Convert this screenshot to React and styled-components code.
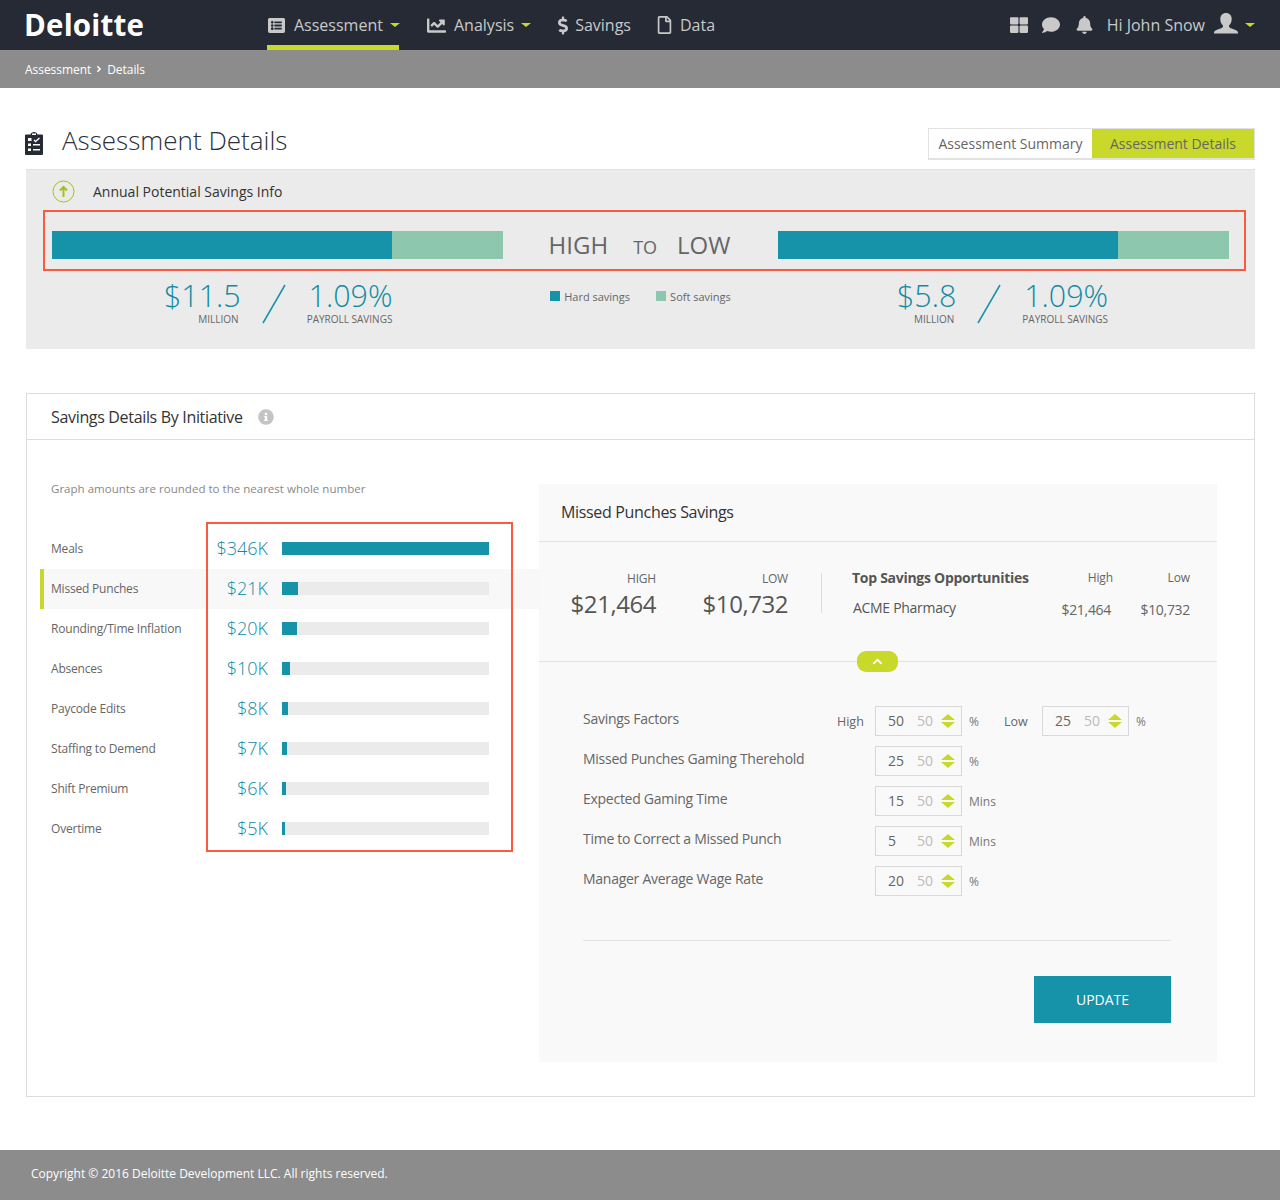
import React from 'react';
import styled, { createGlobalStyle } from 'styled-components';
import { FaListAlt, FaChartLine, FaDollarSign, FaRegFile, FaThLarge, FaComment, FaBell, FaInfoCircle, FaChevronUp, FaAngleRight } from 'react-icons/fa';

const teal = '#1692a9';
const tealText = '#0f8ba3';
const mint = '#8cc7ae';
const lime = '#c8d92b';
const red = '#fb5a3e';

const Global = createGlobalStyle`
  html, body { margin: 0; padding: 0; background: #fff; }
  body { font-family: "Open Sans", "Liberation Sans", sans-serif; color: #555; }
  * { box-sizing: border-box; }
`;
const Page = styled.div`width: 1280px; height: 1200px; display: flex; flex-direction: column;`;
const Header = styled.header`height: 50px; background: #252a34; display: flex; align-items: stretch; padding: 0 25px 0 24px;`;
const Logo = styled.div`width: 243px; font-size: 29.5px; font-weight: 700; color: #fff; line-height: 50px; letter-spacing: 0.2px;`;
const Nav = styled.nav`display: flex; flex: 1;`;
const NavItem = styled.div`
  display: flex; align-items: center; gap: ${p => p.$gap ?? 7}px; height: 50px; color: #c9c9c9; font-size: 16px;
  margin-right: ${p => p.$mr}px; padding-top: 5px;
  border-bottom: 5px solid ${p => (p.$active ? lime : 'transparent')};
  width: ${p => p.$w || 'auto'};
  svg { flex-shrink: 0; }
`;
const Caret = styled.span`
  width: 0; height: 0; border-left: 5px solid transparent; border-right: 5px solid transparent;
  border-top: 4px solid ${lime}; display: inline-block; flex-shrink: 0; margin-left: ${p => p.$ml || 0}px;
`;
const IconList = styled(FaListAlt)`width: 19px; height: 17px;`;
const IconChart = styled(FaChartLine)`width: 21px; height: 19px;`;
const IconDollar = styled(FaDollarSign)`width: 10px; height: 19px;`;
const IconFile = styled(FaRegFile)`width: 15px; height: 18px;`;
const IconGrid = styled(FaThLarge)`width: 18px; height: 18px; margin-right: 14px;`;
const IconChat = styled(FaComment)`width: 18px; height: 18px; margin-right: 15px;`;
const IconBell = styled(FaBell)`width: 19px; height: 18px;`;
const IconInfo = styled(FaInfoCircle)`width: 16px; height: 16px; color: #c4c4c4;`;
const UserIcon = styled.svg`width: 24px; height: 21px; margin: 0 7px 3px 0; fill: #c9c9c9;`;
const UserArea = styled.div`display: flex; align-items: center; color: #c9c9c9; font-size: 16px; padding-bottom: 1px;`;
const Hi = styled.span`margin: 0 9px 0 13px;`;
const Crumb = styled.div`
  height: 38px; background: #8c8c8c; color: #fff; font-size: 12px; display: flex; align-items: center; padding-left: 25px; gap: 3px; letter-spacing: -0.05px;
`;
const TitleRow = styled.div`height: 81px; display: flex; align-items: flex-start; padding: 40px 25px 0 25px; justify-content: space-between;`;
const TitleLeft = styled.div`display: flex; align-items: flex-start; gap: 19px; height: 28px;`;
const TitleIcon = styled.svg`width: 18px; height: 23px; margin-top: 4px;`;
const Title = styled.h1`margin: -2px 0 0; font-size: 26px; font-weight: 300; color: #2c3038; line-height: 28px;`;
const Tabs = styled.div`display: flex; height: 32px; border: 1px solid #e2e2e2; border-bottom-width: 2px;`;
const Tab = styled.div`
  width: ${p => p.$w}px; display: flex; align-items: center; justify-content: center; font-size: 14px; color: #666;
  background: ${p => (p.$active ? lime : '#fff')}; 
`;
const InfoPanel = styled.section`margin: 0 25px 0 26px; height: 180px; background: #ebebeb; border-top: 1px solid #e0e0e0;`;
const InfoHead = styled.div`height: 40px; display: flex; align-items: center; gap: 18px; padding: 2px 0 0 26px; font-size: 14px; color: #333;`;
const RedBar = styled.div`
  margin: 0 9px 0 17px; height: 61px; border: 2px solid ${red}; display: grid; grid-template-columns: 451px 1fr 451px; align-items: center; padding: 8px 15px 0 7px;
`;
const Bar = styled.div`height: 28px; background: ${mint}; display: flex;`;
const BarFill = styled.div`background: ${teal}; height: 100%;`;
const HiLo = styled.div`display: flex; justify-content: center; align-items: baseline; color: #666; font-size: 24px; padding-right: 2px;`;
const To = styled.span`font-size: 18px; margin: 0 20px 0 25px;`;
const StatsRow = styled.div`display: grid; grid-template-columns: 451px 1fr 451px; padding: 0 26px; margin-top: 8px;`;
const StatGroup = styled.div`display: flex; justify-content: flex-start; padding-left: ${p => p.$pl || 0}px;`;
const Stat = styled.div`display: flex; flex-direction: column; align-items: flex-end;`;
const StatValue = styled.div`font-size: 30.4px; font-weight: 300; color: ${tealText}; line-height: 34px;`;
const StatLabel = styled.div`font-size: 10px; color: #666; line-height: 12px; padding-right: ${p => p.$pr || 0}px;`;
const Slash = styled.svg`width: 24px; height: 40px; margin: 5px 21px 0 21px;`;
const Legend = styled.div`display: flex; justify-content: center; gap: 26px; padding-top: 10px; font-size: 11px; color: #666; height: 30px;`;
const LegendItem = styled.div`display: flex; align-items: center; gap: 4px; height: 14px;`;
const Swatch = styled.span`width: 10px; height: 10px; background: ${p => p.$c};`;
const Card = styled.section`margin: 44px 25px 0 26px; height: 704px; border: 1px solid #ddd; position: relative;`;
const CardHead = styled.div`height: 46px; border-bottom: 1px solid #ddd; display: flex; align-items: center; gap: 15px; padding-left: 24px; font-size: 16px; color: #333; letter-spacing: -0.33px;`;
const CardBody = styled.div`display: grid; grid-template-columns: 499px 678px; padding: 44px 0 0 13px;`;
const Note = styled.div`font-size: 11.5px; color: #888; padding-left: 11px; height: 45px; line-height: 9px; letter-spacing: 0.02px;`;
const Row = styled.div`
  height: 40px; display: grid; grid-template-columns: 139px 65px 208px; column-gap: 13px; align-items: center;
  padding: 0 0 2px 7px; border-left: 4px solid ${p => (p.$active ? lime : 'transparent')};
  background: ${p => (p.$active ? '#f8f8f8' : 'transparent')};
`;
const RowLabel = styled.div`font-size: 12px; color: #666; letter-spacing: -0.2px; white-space: nowrap;`;
const RowValue = styled.div`font-size: 18px; color: ${tealText}; text-align: right; font-weight: 300;`;
const Track = styled.div`height: 13px; background: #ebebeb; margin-left: 1px;`;
const Fill = styled.div`height: 100%; background: ${teal};`;
const RedFrame = styled.div`position: absolute; left: 179px; top: 128px; width: 307px; height: 330px; border: 2px solid ${red}; pointer-events: none;`;
const Detail = styled.div`height: 578px; background: #f9f9f9; display: flex; flex-direction: column;`;
const DetailHead = styled.div`height: 58px; border-bottom: 1px solid #e2e2e2; padding: 0 0 2px 22px; display: flex; align-items: center; font-size: 16px; color: #333; letter-spacing: -0.33px;`;
const Summary = styled.div`height: 120px; border-bottom: 1px solid #e2e2e2; position: relative; display: flex; padding-top: 31px;`;
const Fig = styled.div`width: ${p => p.$w}px; text-align: right;`;
const FigLabel = styled.div`font-size: 12px; color: #666; line-height: 12px; letter-spacing: -0.2px;`;
const FigValue = styled.div`font-size: 24px; color: #555; line-height: 32px; margin-top: 3px; letter-spacing: -0.45px;`;
const Divider = styled.div`width: 1px; height: 40px; background: #ddd; margin: 0 30px 0 33px;`;
const Top = styled.div`display: grid; grid-template-columns: 190px 71px 77px; grid-template-rows: 24px 36px; margin-top: -8px; align-items: center;`;
const TopHead = styled.div`font-size: 14px; font-weight: 700; color: #555; letter-spacing: -0.28px; white-space: nowrap;`;
const TopCol = styled.div`font-size: 12px; color: #666; text-align: right; letter-spacing: -0.1px;`;
const TopName = styled.div`font-size: 14px; color: #555; padding-left: 1px; letter-spacing: -0.3px; white-space: nowrap;`;
const TopVal = styled.div`font-size: 14px; color: #666; text-align: right; white-space: nowrap; padding: 5px ${p => p.$pr || 0}px 0 0; letter-spacing: -0.3px;`;
const Pill = styled.div`position: absolute; left: 318px; bottom: -11px; width: 41px; height: 21px; border-radius: 9px; background: ${lime}; color: #fff; display: flex; align-items: center; justify-content: center; font-size: 11px;`;
const Form = styled.div`padding: 39px 46px 0 44px; display: flex; flex-direction: column;`;
const FormRow = styled.div`height: 40px; display: flex; align-items: center;`;
const FormLabel = styled.div`width: 254px; font-size: 14px; color: #666; margin-top: -6px; letter-spacing: -0.27px; white-space: nowrap;`;
const Side = styled.div`width: 38px; font-size: 12.5px; color: #666;`;
const Spin = styled.div`width: 87px; height: 30px; border: 1px solid #d8d8d8; display: flex; align-items: center; font-size: 14px; color: #666; padding: 0 0 1px 12px;`;
const SpinVal = styled.span`width: 29px;`;
const SpinGhost = styled.span`width: 24px; color: #bbb;`;
const Arrows = styled.span`display: flex; flex-direction: column; gap: 2px;`;
const Up = styled.span`width: 0; height: 0; border-left: 7px solid transparent; border-right: 7px solid transparent; border-bottom: 6px solid ${lime};`;
const Down = styled(Up)`border-bottom: 0; border-top: 6px solid ${lime};`;
const Unit = styled.div`width: ${p => p.$w || 35}px; padding-left: 7px; font-size: 12px; color: #777;`;
const FormFoot = styled.div`margin-top: 39px; border-top: 1px solid #e2e2e2; padding-top: 35px; display: flex; justify-content: flex-end;`;
const Update = styled.button`width: 137px; height: 47px; background: ${teal}; color: #fff; border: 0; font: 400 14px "Open Sans", sans-serif; padding: 0;`;
const Footer = styled.footer`margin-top: 53px; height: 50px; background: #8c8c8c; color: #fff; font-size: 12px; display: flex; align-items: center; padding: 0 0 3px 31px;`;

const rows = [
  ['Meals', '$346K', 100], ['Missed Punches', '$21K', 7.7], ['Rounding/Time Inflation', '$20K', 7.2], ['Absences', '$10K', 3.9],
  ['Paycode Edits', '$8K', 2.9], ['Staffing to Demend', '$7K', 2.4], ['Shift Premium', '$6K', 1.9], ['Overtime', '$5K', 1.45],
];

const Spinner = ({ v }) => (
  <Spin><SpinVal>{v}</SpinVal><SpinGhost>50</SpinGhost><Arrows><Up /><Down /></Arrows></Spin>
);

const StatBlock = ({ value, label, pct }) => (
  <>
    <Stat><StatValue>{value}</StatValue><StatLabel $pr={2}>MILLION</StatLabel></Stat>
    <Slash viewBox="0 0 24 40"><line x1="1" y1="39" x2="23" y2="1" stroke={teal} strokeWidth="1.5" /></Slash>
    <Stat><StatValue>{pct}</StatValue><StatLabel>{label}</StatLabel></Stat>
  </>
);

const formRows = [
  ['Missed Punches Gaming Therehold', '25', '%'],
  ['Expected Gaming Time', '15', 'Mins'],
  ['Time to Correct a Missed Punch', '5', 'Mins'],
  ['Manager Average Wage Rate', '20', '%'],
];

export default function App() {
  return (
    <Page>
      <Global />
      <Header>
        <Logo>Deloitte</Logo>
        <Nav>
          <NavItem $active $mr={27} $w="132px" $gap={8}><IconList /> Assessment <Caret $ml={-1} /></NavItem>
          <NavItem $mr={27}><IconChart /> Analysis <Caret /></NavItem>
          <NavItem $mr={26} $gap={7}><IconDollar /> Savings</NavItem>
          <NavItem $mr={0} $gap={8}><IconFile /> Data</NavItem>
        </Nav>
        <UserArea>
          <IconGrid />
          <IconChat />
          <IconBell />
          <Hi>Hi John Snow</Hi>
          <UserIcon viewBox="0 0 24 21">
            <path d="M12 0c3.6 0 5.7 2.6 5.7 6 0 2.6-1 5-2.6 6.3v1.5c0 .9 1.2 1.3 3.2 2 2.8 1 5.1 1.6 5.6 3.2.1.5.1 1 .1 1.5H0c0-.5 0-1 .1-1.5.5-1.6 2.8-2.2 5.6-3.2 2-.7 3.2-1.1 3.2-2v-1.5C7.300 11 6.300 8.600 6.300 6 6.300 2.600 8.400 0 12 0z" />
          </UserIcon>
          <Caret />
        </UserArea>
      </Header>
      <Crumb>Assessment <FaAngleRight size={10} /> Details</Crumb>
      <TitleRow>
        <TitleLeft>
          <TitleIcon viewBox="0 0 18 23">
            <path d="M1 2.500h4.500C5.800 1 7.200 0 9 0s3.200 1 3.500 2.500H17a1 1 0 0 1 1 1V22a1 1 0 0 1-1 1H1a1 1 0 0 1-1-1V3.500a1 1 0 0 1 1-1z" fill="#252a34" />
            <rect x="7" y="1.500" width="4" height="1.500" fill="#fff" />
            <path d="M3 6h3.500v3H3zM3 11.500h3v2.500H3zM3 16.500h3V19H3zM8 12h7v1.500H8zM8 17h7v1.500H8z" fill="#fff" />
            <path d="M9 8l1.500 1.500L14.500 6" fill="none" stroke="#fff" strokeWidth="1.300" />
          </TitleIcon>
          <Title>Assessment Details</Title>
        </TitleLeft>
        <Tabs>
          <Tab $w={163}>Assessment Summary</Tab>
          <Tab $w={162} $active>Assessment Details</Tab>
        </Tabs>
      </TitleRow>
      <InfoPanel>
        <InfoHead>
          <svg width="23" height="23" viewBox="0 0 23 23">
            <circle cx="11.5" cy="11.5" r="10.5" fill="none" stroke="#a9bd1f" strokeWidth="1" />
            <path d="M11.5 17V7M8 10.5l3.5-3.5 3.5 3.5" fill="none" stroke="#a9bd1f" strokeWidth="2" />
          </svg>
          Annual Potential Savings Info
        </InfoHead>
        <RedBar>
          <Bar><BarFill style={{ width: '75.4%' }} /></Bar>
          <HiLo>HIGH<To>TO</To>LOW</HiLo>
          <Bar><BarFill style={{ width: '75.4%' }} /></Bar>
        </RedBar>
        <StatsRow>
          <StatGroup $pl={112}><StatBlock value="$11.5" pct="1.09%" label="PAYROLL SAVINGS" /></StatGroup>
          <Legend>
            <LegendItem><Swatch $c={teal} />Hard savings</LegendItem>
            <LegendItem><Swatch $c={mint} />Soft savings</LegendItem>
          </Legend>
          <StatGroup $pl={119}><StatBlock value="$5.8" pct="1.09%" label="PAYROLL SAVINGS" /></StatGroup>
        </StatsRow>
      </InfoPanel>
      <Card>
        <CardHead>Savings Details By Initiative <IconInfo /></CardHead>
        <CardBody>
          <div>
            <Note>Graph amounts are rounded to the nearest whole number</Note>
            {rows.map(([label, value, pct], i) => (
              <Row key={label} $active={i === 1}>
                <RowLabel>{label}</RowLabel>
                <RowValue>{value}</RowValue>
                <Track><Fill style={{ width: `${pct}%` }} /></Track>
              </Row>
            ))}
          </div>
          <Detail>
            <DetailHead>Missed Punches Savings</DetailHead>
            <Summary>
              <Fig $w={117}><FigLabel>HIGH</FigLabel><FigValue>$21,464</FigValue></Fig>
              <Fig $w={132}><FigLabel>LOW</FigLabel><FigValue>$10,732</FigValue></Fig>
              <Divider />
              <Top>
                <TopHead>Top Savings Opportunities</TopHead>
                <TopCol>High</TopCol>
                <TopCol>Low</TopCol>
                <TopName>ACME Pharmacy</TopName>
                <TopVal $pr={2}>$21,464</TopVal>
                <TopVal>$10,732</TopVal>
              </Top>
              <Pill><FaChevronUp /></Pill>
            </Summary>
            <Form>
              <FormRow>
                <FormLabel>Savings Factors</FormLabel>
                <Side>High</Side>
                <Spinner v="50" />
                <Unit $w={42}>%</Unit>
                <Side>Low</Side>
                <Spinner v="25" />
                <Unit>%</Unit>
              </FormRow>
              {formRows.map(([label, v, unit]) => (
                <FormRow key={label}>
                  <FormLabel>{label}</FormLabel>
                  <Side />
                  <Spinner v={v} />
                  <Unit $w={42}>{unit}</Unit>
                </FormRow>
              ))}
              <FormFoot><Update>UPDATE</Update></FormFoot>
            </Form>
          </Detail>
        </CardBody>
        <RedFrame />
      </Card>
      <Footer>Copyright © 2016 Deloitte Development LLC. All rights reserved.</Footer>
    </Page>
  );
}
